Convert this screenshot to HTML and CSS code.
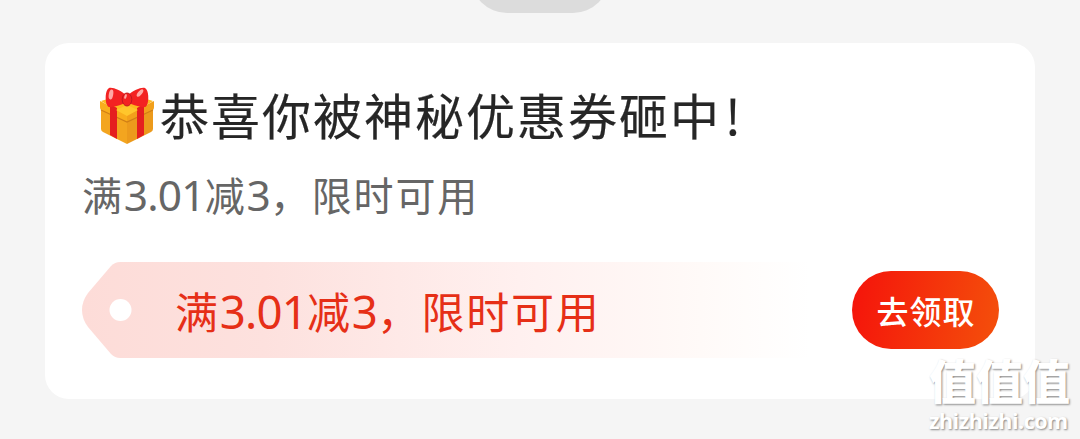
FILE: index.html
```
<!DOCTYPE html>
<html lang="zh-CN">
<head>
    <meta charset="utf-8">
    <title>优惠券</title>
    <link rel="stylesheet" href="styles.css">
</head>
<body>
    <div class="time-pill"></div>

    <div class="card">
        <div class="title">
            <svg class="gift" viewBox="0 0 56 58" width="56" height="58">
                <path fill="#f3a51f" d="M2 15 28 29v28L4 45Q2 44 2 42z"/>
                <path fill="#ec9a1c" d="M54 15 28 29v28l24-12q2-1 2-3z"/>
                <path fill="#fdb91f" d="M2 14 28 6l26 8-26 16z"/>
                <path fill="#f9ad1c" d="M1 14 28 28v7L2 23Q1 22 1 20z"/>
                <path fill="#f2a01b" d="M55 14 28 28v7l26-12q1-1 1-3z"/>
                <path fill="none" stroke="#d07f16" stroke-width="1.2" d="M2 23 28 35 54 23"/>
                <path fill="#e51f1f" d="m11 17 7 4v31l-7-4zM38 21l7-4v31l-7 4z"/>
                <path fill="#ffc62c" d="m17 23 11-5 11 5-11 6z"/>
                <path fill="#f32222" d="M27 8C21 3 14 0 10 1 6 3 6 14 8 18q1 3 5 2c5-1 10-2 14-5zM29 8C35 3 42 0 46 1c4 2 4 13 2 17q-1 3-5 2c-5-1-10-2-14-5z"/>
                <ellipse cx="28" cy="12.500" rx="4.800" ry="6.500" fill="#f32222" stroke="#c01820"/>
                <ellipse cx="12" cy="7.500" rx="2.200" ry="5" fill="#ffa9a4" transform="rotate(10 12 7.500)"/>
                <ellipse cx="41" cy="6" rx="2" ry="4.500" fill="#ffa9a4" transform="rotate(40 41 6)"/>
                <ellipse cx="26.500" cy="9.500" rx="1.100" ry="2.500" fill="#ffa9a4" transform="rotate(20 26.500 9.500)"/>
            </svg>
            <h1>恭喜你被神秘优惠券砸中<span class="mark">!</span></h1>
        </div>
        <p class="desc">满<span class="num">3.01</span>减<span class="num">3</span>，限时可用</p>

        <div class="row">
            <div class="coupon">
                <svg class="coupon-bg" viewBox="0 0 728 96" width="728" height="96">
                    <defs>
                        <linearGradient id="fade">
                            <stop offset="0" stop-color="#fddcd8"/>
                            <stop offset="0.250" stop-color="#fde1de"/>
                            <stop offset="0.600" stop-color="#fff0ef"/>
                            <stop offset="0.850" stop-color="#fffaf8"/>
                            <stop offset="1" stop-color="#ffffff"/>
                        </linearGradient>
                    </defs>
                    <path fill="url(#fade)" d="M38 0H728V96H38Q33 96 29 92L6 65Q0 57 0 48T6 31L29 4Q33 0 38 0z"/>
                    <circle cx="38.500" cy="48" r="11" fill="#fff"/>
                </svg>
                <span class="coupon-text">满<span class="num">3.01</span>减<span class="num">3</span>，限时可用</span>
            </div>
            <button class="get">去领取</button>
        </div>
    </div>

    <div class="watermark">
        <div class="wm-name">值值值</div>
        <div class="wm-site">zhizhizhi.com</div>
    </div>
</body>
</html>
```
FILE: styles.css
```
* {
    box-sizing: border-box;
}

body {
    margin: 0;
    height: 439px;
    overflow: hidden;
    position: relative;
    background-color: #f5f5f5;
    font-family: "Noto Sans CJK SC", sans-serif;
}

.time-pill {
    width: 138px;
    height: 72px;
    margin: -59px auto 30px;
    border-radius: 36px;
    background-color: #dcdcdc;
}

.card {
    width: 990px;
    height: 356px;
    margin: 0 auto;
    padding: 38px 36px 0 37px;
    border-radius: 24px;
    background-color: #ffffff;
}

.title {
    display: flex;
    align-items: center;
    height: 70px;
    padding-left: 17px;
}

.gift {
    margin-right: 5px;
}

h1 {
    margin: 0;
    font-size: 49px;
    font-weight: 400;
    line-height: 70px;
    padding-bottom: 5px;
    letter-spacing: 2px;
    color: #262626;
    -webkit-text-stroke: 0.2px #262626;
    white-space: nowrap;
}

.mark {
    margin-left: 4px;
}

.desc {
    margin: 11px 0 0;
    height: 64px;
    font-size: 40px;
    line-height: 64px;
    letter-spacing: 1.8px;
    color: #666666;
    white-space: nowrap;
}

.num {
    font-family: "Noto Sans", sans-serif;
    font-size: 1.06em;
    letter-spacing: -0.8px;
}

.row {
    display: flex;
    align-items: center;
    justify-content: space-between;
    margin-top: 36px;
}

.coupon {
    position: relative;
    width: 728px;
    height: 96px;
    padding-left: 93px;
}

.coupon-bg {
    position: absolute;
    left: 0;
    top: 0;
}

.coupon-text {
    position: relative;
    font-size: 43px;
    line-height: 97px;
    letter-spacing: 1.7px;
    color: #e62f17;
    white-space: nowrap;
}

.get {
    width: 147px;
    height: 78px;
    padding: 0 0 1px 1px;
    border: none;
    border-radius: 39px;
    background: linear-gradient(100deg, #f5130b, #f4500b);
    color: #ffffff;
    font-family: inherit;
    font-size: 32px;
    font-weight: 500;
    letter-spacing: 1px;
}

.watermark {
    position: absolute;
    right: 9px;
    bottom: 6px;
    width: 142px;
    color: #ffffff;
    text-shadow: 1px 1px 2px #888888;
    white-space: nowrap;
}

.wm-name {
    font-size: 47px;
    font-weight: 900;
    line-height: 50px;
    margin-bottom: 5px;
}

.wm-site {
    font-family: "Open Sans", sans-serif;
    font-size: 21.5px;
    font-weight: 700;
    line-height: 24px;
    letter-spacing: -0.5px;
}
```
